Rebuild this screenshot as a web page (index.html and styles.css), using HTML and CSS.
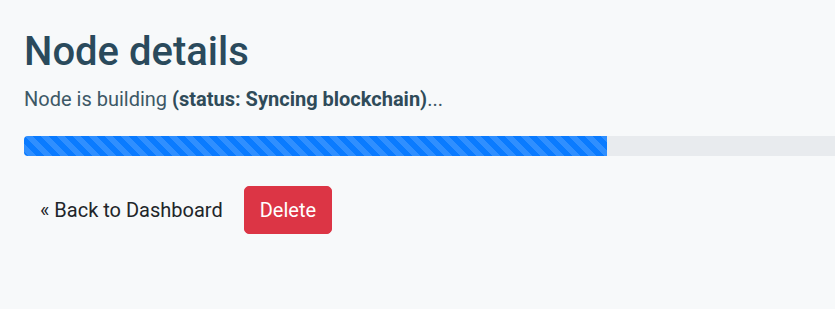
FILE: index.html
```html
<!DOCTYPE html>
<html lang="en">
<head>
<meta charset="utf-8">
<title>Node details</title>
<link rel="stylesheet" href="styles.css">
</head>
<body>
<main class="page">
  <h1 class="title">Node details</h1>
  <p class="status">Node is building <strong>(status: Syncing blockchain)</strong>...</p>
  <div class="progress">
    <div class="progress-bar" style="width: 583px"></div>
  </div>
  <div class="actions">
    <a class="btn btn-link" href="#">« Back to Dashboard</a>
    <button class="btn btn-danger" type="button">Delete</button>
  </div>
</main>
</body>
</html>
```

FILE: styles.css
```css
html, body {
  margin: 0;
  padding: 0;
  overflow: hidden;
}
body {
  background: #f7f9fa;
  font-family: Roboto, "Liberation Sans", Arial, sans-serif;
  color: #2e4a58;
}
.page {
  padding: 28px 0 0 24px;
}
.title {
  margin: 0 0 8px;
  font-size: 40px;
  font-weight: 500;
  line-height: 1.2;
  color: #2a4a5c;
}
.status {
  margin: 0 0 22px;
  font-size: 20px;
  line-height: 30px;
  font-weight: 400;
  color: #3d5866;
}
.status strong {
  font-weight: 700;
  color: #2f4b59;
}
.progress {
  width: 1166px;
  height: 20px;
  background: #e8ebee;
  border-radius: 4px;
  overflow: hidden;
  display: flex;
}
.progress-bar {
  height: 100%;
  background-color: #0a7bff;
  background-image: linear-gradient(45deg, rgba(255,255,255,.15) 25%, transparent 25%, transparent 50%, rgba(255,255,255,.15) 50%, rgba(255,255,255,.15) 75%, transparent 75%, transparent);
  background-size: 16px 16px;
}
.actions {
  margin-top: 30px;
  display: flex;
  gap: 3px;
  align-items: center;
}
.btn {
  display: inline-block;
  box-sizing: border-box;
  font-family: inherit;
  font-size: 20px;
  line-height: 30px;
  padding: 8px 16px;
  border: 1px solid transparent;
  border-radius: 5px;
  text-decoration: none;
  cursor: pointer;
}
.btn-link {
  color: #212529;
  background: transparent;
  padding-left: 15px;
  padding-right: 17px;
}
.btn-danger {
  color: #fff;
  background: #dc3545;
  border-color: #dc3545;
  padding-left: 15px;
  padding-right: 15px;
}
```
